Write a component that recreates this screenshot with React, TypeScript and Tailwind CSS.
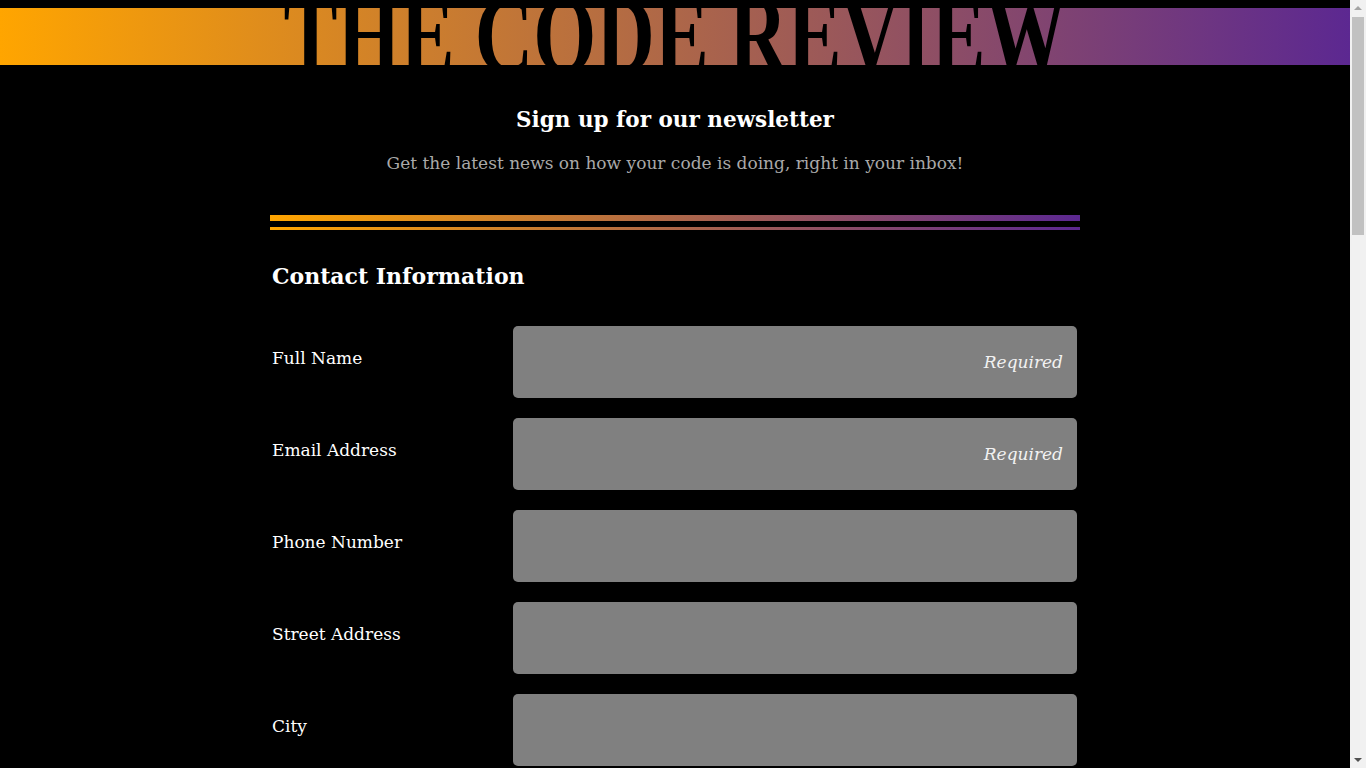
import React from 'react';

const fields = [
  { label: 'Full Name', required: true, type: 'text' },
  { label: 'Email Address', required: true, type: 'email' },
  { label: 'Phone Number', required: false, type: 'tel' },
  { label: 'Street Address', required: false, type: 'text' },
  { label: 'City', required: false, type: 'text' },
  { label: 'State', required: false, type: 'text' },
  { label: 'Zip Code', required: false, type: 'text' },
];

export default function App() {
  return (
    <div className="flex h-screen overflow-hidden bg-black text-white font-['DejaVu_Serif',serif]">
      <div className="flex-1 min-w-0 pt-2 pb-16">
        {/* Masthead */}
        <header className="h-[57px] overflow-hidden bg-[linear-gradient(to_right,#ffa500,#5c2891)] flex items-center justify-center">
          <h1 className="text-[81px] leading-none font-bold text-black font-['Liberation_Serif',serif] scale-y-[1.35] whitespace-nowrap">
            THE CODE REVIEW
          </h1>
        </header>

        <main className="max-w-[810px] mx-auto">
          {/* Intro */}
          <div className="text-center pt-[39px]">
            <h2 className="text-[21.5px] font-bold leading-8">Sign up for our newsletter</h2>
            <p className="mt-[13px] text-[17px] text-[#a9a9a9] leading-7">
              Get the latest news on how your code is doing, right in your inbox!
            </p>
          </div>

          {/* Divider */}
          <div className="mt-[38px] flex flex-col gap-[6px]">
            <div className="h-[6px] bg-[linear-gradient(to_right,#ffa500,#5c2891)]" />
            <div className="h-[3px] bg-[linear-gradient(to_right,#ffa500,#5c2891)]" />
          </div>

          {/* Contact form */}
          <section className="mt-[28px]">
            <h3 className="px-[2px] text-[22px] font-bold leading-9">Contact Information</h3>
            <form className="mt-[32px] flex flex-col gap-5">
              {fields.map((f) => (
                <div key={f.label} className="grid grid-cols-[243px_1fr] items-start">
                  <label className="px-[2px] pt-[20px] text-[17px] leading-6">{f.label}</label>
                  <input
                    type={f.type}
                    placeholder={f.required ? 'Required' : ''}
                    className="h-[72px] w-[564px] rounded-[5px] bg-[#808080] px-[14px] text-right text-[17px] italic text-white placeholder:text-[#f2f2f2] outline-none"
                  />
                </div>
              ))}
            </form>
          </section>
        </main>
      </div>

      {/* Scrollbar */}
      <div className="w-4 shrink-0 bg-[#f1f1f1] flex flex-col items-center">
        <svg width="16" height="16" viewBox="0 0 16 16" className="shrink-0">
          <path d="M4 10 L8 6 L12 10 Z" fill="#a3a3a3" />
        </svg>
        <div className="mt-[1px] h-[218px] w-[12px] bg-[#c1c1c1]" />
        <div className="flex-1" />
        <svg width="16" height="16" viewBox="0 0 16 16" className="shrink-0">
          <path d="M4 6 L12 6 L8 10 Z" fill="#505050" />
        </svg>
      </div>
    </div>
  );
}
